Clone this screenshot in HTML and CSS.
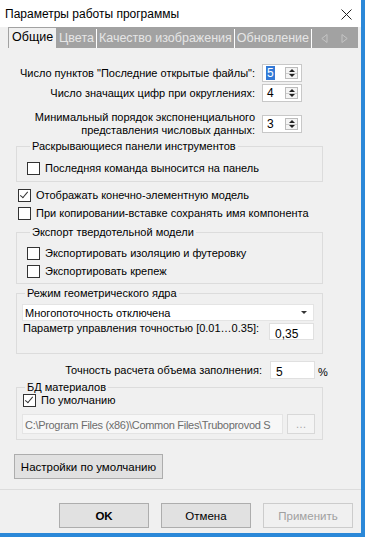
FILE: index.html
```html
<!DOCTYPE html>
<html>
<head lang="ru">
    <meta charset="UTF-8">
    <title>Параметры работы программы</title>
    <link rel="stylesheet" href="styles.css">
</head>
<body>
<div class="window">
    <div class="titlebar">
        <span class="title">Параметры работы программы</span>
        <svg class="close" width="11" height="11" viewBox="0 0 11 11">
            <path d="M0.5 0.5 L10.5 10.5 M10.5 0.5 L0.5 10.5" stroke="#222" stroke-width="1"/>
        </svg>
    </div>

    <div class="tabs">
        <span class="tab active">Общие</span>
        <span class="tab">Цвета</span>
        <span class="tab">Качество изображения</span>
        <span class="tab">Обновление</span>
        <span class="tab-arrows">
            <svg width="7" height="9" viewBox="0 0 7 9"><path d="M6 0.5 L0.8 4.5 L6 8.5 Z" fill="none" stroke="#c4c4c4"/></svg>
            <svg width="7" height="9" viewBox="0 0 7 9"><path d="M1 0.5 L6.2 4.5 L1 8.5 Z" fill="none" stroke="#c4c4c4"/></svg>
        </span>
    </div>

    <div class="page">
        <div class="row r1">
            <span class="label">Число пунктов "Последние открытые файлы":</span>
            <span class="spin"><span class="value selected">5</span><span class="spin-btn"><i class="up"></i><i class="down"></i></span></span>
        </div>
        <div class="row r2">
            <span class="label">Число значащих цифр при округлениях:</span>
            <span class="spin"><span class="value">4</span><span class="spin-btn"><i class="up"></i><i class="down"></i></span></span>
        </div>
        <div class="row r3">
            <span class="label">Минимальный порядок экспоненциального<br>представления числовых данных:</span>
            <span class="spin"><span class="value">3</span><span class="spin-btn"><i class="up"></i><i class="down"></i></span></span>
        </div>

        <fieldset class="group g1">
            <legend>Раскрывающиеся панели инструментов</legend>
            <label class="check"><span class="box"></span>Последняя команда выносится на панель</label>
        </fieldset>

        <label class="check c1"><span class="box checked"></span>Отображать конечно-элементную модель</label>
        <label class="check c2"><span class="box"></span>При копировании-вставке сохранять имя компонента</label>

        <fieldset class="group g2">
            <legend>Экспорт твердотельной модели</legend>
            <label class="check"><span class="box"></span>Экспортировать изоляцию и футеровку</label>
            <label class="check c3"><span class="box"></span>Экспортировать крепеж</label>
        </fieldset>

        <fieldset class="group g3">
            <legend>Режим геометрического ядра</legend>
            <div class="select">Многопоточность отключена<span class="caret"></span></div>
            <div class="param">
                <span class="label">Параметр управления точностью [0.01…0.35]:</span>
                <span class="edit">0,35</span>
            </div>
        </fieldset>

        <div class="fill">
            <span class="label">Точность расчета объема заполнения:</span>
            <span class="edit">5</span>
            <span class="unit">%</span>
        </div>

        <fieldset class="group g4">
            <legend>БД материалов</legend>
            <label class="check"><span class="box checked"></span>По умолчанию</label>
            <div class="path">
                <span class="path-field">C:\Program Files (x86)\Common Files\Truboprovod S</span>
                <span class="browse">…</span>
            </div>
        </fieldset>

        <div class="defaults"><span class="btn wide">Настройки по умолчанию</span></div>
    </div>

    <div class="footer">
        <span class="btn bold">OK</span>
        <span class="btn">Отмена</span>
        <span class="btn disabled">Применить</span>
    </div>
</div>
</body>
</html>
```

FILE: styles.css
```css
body {
    margin: 0;
    padding: 0;
    background: #2b88d8;
    font-family: "Liberation Sans", Arial, sans-serif;
    font-size: 11px;
    color: #000;
}

.window {
    width: 361px;
    height: 533px;
    background: #f0f0f0;
    display: flex;
    flex-direction: column;
    overflow: hidden;
}

.titlebar {
    height: 27px;
    flex-shrink: 0;
    background: #fff;
    display: flex;
    align-items: center;
    justify-content: space-between;
    padding: 0 9px 0 5px;
    box-sizing: border-box;
}

.title {
    font-size: 12px;
    margin-top: 1px;
}

.close {
    margin-top: 1px;
}

/* tab strip */
.tabs {
    margin-left: 8px;
    width: 350px;
    height: 21px;
    flex-shrink: 0;
    background: #a2a2a2;
    display: flex;
    align-items: flex-end;
    font-size: 12.5px;
}

.tab {
    height: 19px;
    line-height: 19px;
    padding: 0 2px;
    color: #e6e6e6;
    border-right: 1px solid #fff;
    white-space: nowrap;
}

.tab.active {
    height: 20px;
    background: #f0f0f0;
    color: #000;
    margin-left: 1px;
    padding: 0 3px;
    border-right: none;
    margin-right: 1px;
}

.tab-arrows {
    display: flex;
    gap: 13px;
    padding-left: 9px;
    align-self: center;
    margin-top: 2px;
}

/* general page */
.page {
    flex: 1;
    padding: 16px 38px 0 16px;
}

.row {
    display: flex;
    justify-content: flex-end;
    align-items: center;
    padding-right: 21px;
}

.row .label {
    text-align: right;
    line-height: 13px;
    margin-right: 7px;
}

.r2 {
    margin-top: 2px;
}

.r3 {
    margin-top: 9px;
}

.spin {
    width: 40px;
    height: 18px;
    box-sizing: border-box;
    background: #fff;
    border: 1px solid #c8c8c8;
    display: flex;
    align-items: center;
    justify-content: space-between;
    padding: 0 3px;
    font-size: 12px;
}

.value {
    padding: 0 1px;
    line-height: 14px;
}

.value.selected {
    background: #3379d6;
    color: #fff;
}

.spin-btn {
    width: 13px;
    height: 12px;
    border: 1px solid #bcbcbc;
    box-sizing: border-box;
    background: #f4f4f4;
    display: flex;
    flex-direction: column;
    align-items: center;
    justify-content: space-between;
    padding: 1px 0;
    position: relative;
}

.spin-btn:after {
    content: "";
    position: absolute;
    left: 0;
    right: 0;
    top: 5px;
    border-top: 1px solid #ccc;
}

.spin-btn i {
    width: 0;
    height: 0;
    border-left: 3px solid transparent;
    border-right: 3px solid transparent;
}

.spin-btn .up {
    border-bottom: 3px solid #222;
}

.spin-btn .down {
    border-top: 3px solid #222;
}

/* group boxes */
.group {
    margin: 3px 0 0 0;
    padding: 9px 0 6px 10px;
    border: 1px solid #dcdcdc;
    min-width: 0;
}

.group legend {
    padding: 0 2px;
    margin-left: 3px;
    line-height: 13px;
}

.check {
    display: flex;
    align-items: center;
    line-height: 13px;
    height: 13px;
}

.box {
    width: 11px;
    height: 11px;
    border: 1px solid #333;
    background: #fff;
    margin-right: 5px;
    position: relative;
}

.box.checked:after {
    content: "";
    position: absolute;
    left: 3px;
    top: 0;
    width: 3px;
    height: 7px;
    border-right: 1px solid #333;
    border-bottom: 1px solid #333;
    transform: rotate(40deg);
}

.c1 {
    margin: 7px 0 0 2px;
}

.c2 {
    margin: 5px 0 0 2px;
}

.g2 {
    margin-top: 6px;
    padding-top: 8px;
    padding-bottom: 5px;
}

.c3 {
    margin-top: 5px;
}

.g3 {
    margin-top: 3px;
    padding: 4px 8px 13px 5px;
}

.select {
    height: 17px;
    background: #fff;
    border: 1px solid #e4e4e4;
    display: flex;
    align-items: center;
    justify-content: space-between;
    padding: 0 6px 0 2px;
    box-sizing: border-box;
}

.caret {
    width: 0;
    height: 0;
    border-left: 3px solid transparent;
    border-right: 3px solid transparent;
    border-top: 3px solid #333;
}

.param {
    display: flex;
    justify-content: space-between;
    align-items: flex-start;
    margin-top: 1px;
}

.param .label {
    margin-top: 0;
    margin-left: 1px;
}

.edit {
    width: 45px;
    height: 17px;
    box-sizing: border-box;
    background: #fff;
    border: 1px solid #e0e0e0;
    padding: 5px 0 0 5px;
    font-size: 12px;
    line-height: 11px;
}

.param .edit {
    margin-top: 1px;
}

.fill {
    display: flex;
    align-items: center;
    justify-content: flex-end;
    margin: 7px -3px 0 0;
}

.fill .label {
    margin-right: 8px;
}

.fill .edit {
    height: 18px;
}

.unit {
    width: 8px;
    margin-left: 3px;
    margin-top: 4px;
}

.g4 {
    margin-top: 2px;
    padding: 0 7px 5px 5px;
}

.g4 .check {
    margin-left: 1px;
}

.path {
    display: flex;
    margin-top: 7px;
    gap: 4px;
}

.path-field {
    flex: 1;
    height: 20px;
    line-height: 20px;
    background: #f7f7f7;
    border: 1px solid #e4e4e4;
    box-sizing: border-box;
    padding-left: 2px;
    color: #6d6d6d;
    white-space: nowrap;
    overflow: hidden;
    font-size: 11px;
    letter-spacing: -0.3px;
}

.browse {
    width: 28px;
    height: 20px;
    box-sizing: border-box;
    border: 1px solid #d8d8d8;
    background: #f4f4f4;
    color: #a8a8a8;
    text-align: center;
    line-height: 18px;
}

/* buttons */
.defaults {
    margin: 14px 0 0 -2px;
}

.btn {
    display: inline-flex;
    align-items: center;
    justify-content: center;
    width: 90px;
    height: 25px;
    box-sizing: border-box;
    background: #e1e1e1;
    border: 1px solid #adadad;
    font-size: 11.5px;
}

.btn.wide {
    width: 149px;
}

.btn.bold {
    font-weight: bold;
}

.btn.disabled {
    background: #f0f0f0;
    border-color: #cccccc;
    color: #a0a0a0;
}

.footer {
    border-top: 1px solid #dcdcdc;
    height: 44px;
    flex-shrink: 0;
    display: flex;
    justify-content: flex-end;
    align-items: flex-start;
    gap: 12px;
    padding: 13px 8px 0 0;
    box-sizing: border-box;
}
```
